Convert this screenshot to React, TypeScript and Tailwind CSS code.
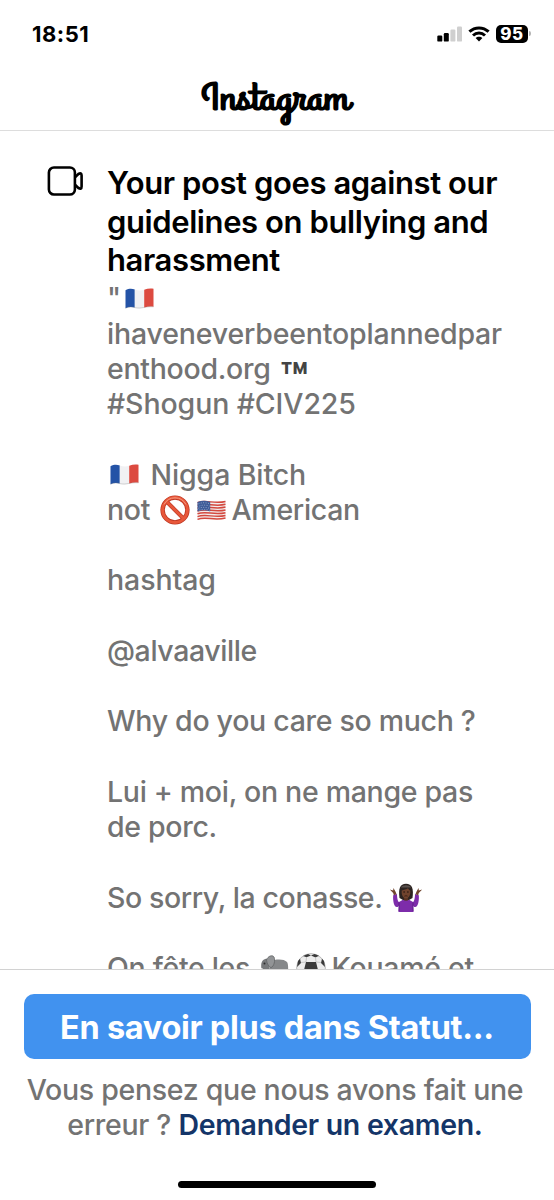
import type { ReactNode } from 'react'

function FlagFrance({ className }: { className?: string }) {
  return (
    <svg viewBox="0 0 29 21" className={`w-[29px] h-[21px] shrink-0 ${className}`}>
      <path d="M0.5 2.2C4 0.4 7 0.6 9.8 1.5V19.6C7 18.6 4 18.6 0.5 20.2Z" fill="#2453a6" />
      <path d="M9.8 1.5C13 2.6 16 2.8 19.2 1.8V19.6C16 20.5 13 20.6 9.8 19.6Z" fill="#f1f1f3" />
      <path d="M19.2 1.8C22.5 0.5 25.5 0.1 28.5 0.8V18.8C25.5 18.1 22.5 18.6 19.2 19.6Z" fill="#dc4a40" />
      <path d="M0.5 20.2C4 18.6 7 18.6 9.8 19.6C16 21.2 20 18.2 28.5 18.8" fill="none" stroke="#777" strokeOpacity="0.5" strokeWidth="0.6" />
    </svg>
  )
}

function FlagUsa({ className }: { className?: string }) {
  return (
    <svg viewBox="0 0 29 21" className={`w-[29px] h-[21px] shrink-0 ${className}`}>
      <path d="M0.5 2C9 -1.5 17 3.8 28.5 0.8V18.6C18 21.5 9 16.8 0.5 20Z" fill="#f2eded" />
      <g fill="none" stroke="#d4493f" strokeWidth="1.5">
        <path d="M0.5 2.6C9 -0.8 17 4.4 28.5 1.5" />
        <path d="M0.5 5.4C9 2 17 7.2 28.5 4.3" />
        <path d="M0.5 8.2C9 4.8 17 10 28.5 7.1" />
        <path d="M0.5 11C9 7.6 17 12.8 28.5 9.9" />
        <path d="M0.5 13.8C9 10.4 17 15.6 28.5 12.7" />
        <path d="M0.5 16.6C9 13.2 17 18.4 28.5 15.5" />
        <path d="M0.5 19.4C9 16 17 21.2 28.5 18" />
      </g>
      <path d="M0.5 2C5 0.2 9 0.6 13.2 1.8V11.4C9 10 5 10 0.5 11.4Z" fill="#3e5c98" />
      <g stroke="#a9bad8" strokeWidth="0.8" strokeDasharray="0.9 1.5" fill="none">
        <path d="M1.5 3.8C5 2.3 9 2.5 12.5 3.7" />
        <path d="M2.5 6C5 4.8 9 4.9 12.5 6" />
        <path d="M1.5 8.2C5 7 9 7.1 12.5 8.3" />
        <path d="M2.5 10C5 9.1 9 9.2 12.5 10.2" />
      </g>
    </svg>
  )
}

function Prohibited({ className }: { className?: string }) {
  return (
    <svg viewBox="0 0 30 30" className={`w-[30px] h-[30px] shrink-0 ${className}`}>
      <g fill="none">
        <circle cx="15" cy="15" r="12.4" stroke="#b93420" strokeWidth="4.4" />
        <path d="M6.5 6.5L23.5 23.5" stroke="#b93420" strokeWidth="4" />
        <circle cx="15" cy="15" r="12.4" stroke="#e8573a" strokeWidth="3" />
        <path d="M6.5 6.5L23.5 23.5" stroke="#e8573a" strokeWidth="2.8" />
        <path d="M4 9.5A12.4 12.4 0 0 1 26 9.5" stroke="#f59a80" strokeWidth="1" />
      </g>
    </svg>
  )
}

function Shrug({ className }: { className?: string }) {
  return (
    <svg viewBox="0 0 34 30" className={`w-[34px] h-[30px] shrink-0 ${className}`}>
      <path d="M10.5 15C9.2 5.5 11 0.8 17 0.8C23 0.8 24.8 5.5 23.5 15L20 17H14Z" fill="#2b2320" />
      <path d="M11.8 4.6C13.5 1.6 20.5 1.6 22.2 4.6Z" fill="#58504c" />
      <path d="M14.8 13H19.2V18H14.8Z" fill="#5a3322" />
      <path d="M12.7 7.5C15 7 17.5 6.2 19 5.2C19.6 6.4 20.5 7.2 21.3 7.5C21.7 12 19.7 15.4 17 15.4C14.3 15.4 12.3 12 12.7 7.5Z" fill="#70432d" />
      <path d="M14.3 9H16M18 9H19.7" stroke="#20130d" strokeWidth="1.1" />
      <path d="M15.4 13.2Q17 12.2 18.6 13.2" stroke="#341912" strokeWidth="0.8" fill="none" />
      <path d="M4.2 12.2L8 11C8 14 8.6 18.5 10 19L14 16.7Q17 18.6 20 16.7L24 19C25.4 18.5 26 14 26 11L29.8 12.2C30.3 17.5 29 24 26.2 24C24.8 24 24.3 23 24 22.4L24.6 29H9.4L10 22.4C9.7 23 9.2 24 7.8 24C5 24 3.7 17.5 4.2 12.2Z" fill="#7d2caa" />
      <path d="M10 19.5V28M24 19.5V28" stroke="#571880" strokeWidth="0.8" />
      <path d="M4.8 12.3L4.2 10L0.8 6.5L4.2 7.6L4.4 5L6.2 8L7.6 11.2ZM29.2 12.3L29.8 10L33.2 6.5L29.8 7.6L29.6 5L27.8 8L26.4 11.2Z" fill="#70432d" />
    </svg>
  )
}

function Elephant({ className }: { className?: string }) {
  return (
    <svg viewBox="0 0 30 26" className={`w-[30px] h-[26px] shrink-0 ${className}`}>
      <path d="M10 6C16 4 24 3.6 27 7C29 9.5 28 20 27 25H22V18H15V25H9V15Z" fill="#858789" />
      <path d="M9 4C4 3 1 6 1.2 11C1.3 16 0.5 19 2 22H5C4.4 18 6 16 9 15Z" fill="#77797b" />
      <path d="M6.5 5C8 0.8 12.5 -0.4 14 2C15.5 5.5 14 11.5 11 12.6C9 12 7 9 6.5 5Z" fill="#929496" stroke="#626466" strokeWidth="0.8" />
      <circle cx="4.5" cy="8.5" r="1" fill="#303030" />
      <path d="M2 13L0.8 17" stroke="#eee" strokeWidth="1.5" />
    </svg>
  )
}

function SoccerBall({ className }: { className?: string }) {
  return (
    <svg viewBox="0 0 30 30" className={`w-[30px] h-[30px] shrink-0 ${className}`}>
      <circle cx="15" cy="15" r="14.4" fill="#ececec" stroke="#aaa" strokeWidth="0.8" />
      <path d="M10 9H20L22 17L15 22L8 17ZM12 0.9L15 2.4L18.5 0.9L23 2.8L19.5 4.4L15 2.4L10.5 4.2L7 3ZM2 8L4 5.8L5 10L1 14ZM28 8L26 5.8L25 10L29 14Z" fill="#3a3a3a" />
      <path d="M10 9L5 9.5M20 9L25 9.5M10 9L10.5 4.2M20 9L19.5 4.4" stroke="#bbb" strokeWidth="0.8" />
    </svg>
  )
}

function StatusBar() {
  return (
    <div className="h-[67px] pl-8 pr-[23px] flex items-center justify-between">
      <div className="text-[22px] leading-6 font-bold tracking-[0.5px]">18:51</div>
      <div className="flex items-center">
        <svg viewBox="0 0 26 16" className="w-[26px] h-4 mr-[5px]">
          <rect x="0.3" y="9.6" width="5" height="6" rx="1.2" />
          <rect x="6.8" y="7" width="5" height="8.6" rx="1.2" />
          <rect x="13.4" y="3.6" width="5" height="12" rx="1.2" fill="#cfcfcf" />
          <rect x="20" y="0.4" width="5" height="15.2" rx="1.2" fill="#cfcfcf" />
        </svg>
        <svg viewBox="0 0 22 16" className="w-[22px] h-4 mr-1.5">
          <g fill="none" stroke="#000" strokeWidth="3">
            <path d="M1.4 5.7C6.8 0.6 15.2 0.6 20.6 5.7" />
            <path d="M5 9.5C8.4 6.3 13.6 6.3 17 9.5" />
          </g>
          <path d="M7.6 12.1C9.5 10.3 12.5 10.3 14.4 12.1L11 15.6Z" />
        </svg>
        <div className="w-8 h-[18px] rounded-[5px] bg-black text-white text-[17px] leading-[18px] font-extrabold text-center tracking-[0.5px]">
          95
        </div>
        <div className="w-0.5 h-[5px] ml-px rounded-r-full bg-[#b5b5b5]" />
      </div>
    </div>
  )
}

function Line({ children, className = '' }: { children?: ReactNode; className?: string }) {
  return <div className={`h-[35.25px] flex items-center whitespace-pre ${className}`}>{children}</div>
}

function App() {
  return (
    <div className="w-[554px] h-[1200px] flex flex-col overflow-hidden bg-white text-black font-['Inter','Liberation_Sans',sans-serif]">
      <StatusBar />

      <header className="h-16 shrink-0 border-b border-[#dddddd] flex justify-center items-center pr-1">
        <div className="scale-x-[1.23] font-['Grand_Hotel','Lato',cursive] text-[38px] leading-10 font-bold">Instagram</div>
      </header>

      <main className="h-[838px] shrink-0 overflow-hidden flex pl-[47px] pt-[33px]">
        <svg viewBox="0 0 37 30" fill="none" stroke="#000" strokeWidth="2.6" className="w-[37px] h-[30px] mt-0.5 mr-[23px] shrink-0">
          <rect x="1.9" y="1.5" width="26" height="27" rx="5" />
          <path d="M28 11.2L31.4 8Q34.6 6.2 34.6 9.6V20.4Q34.6 23.8 31.4 22L28 18.8" strokeLinejoin="round" />
        </svg>

        <div>
          <h1 className="text-[31px] leading-[38.7px] font-semibold whitespace-pre tracking-[-0.4px]">
            <span className="block">Your post goes against our</span>
            <span className="block">guidelines on bullying and</span>
            <span className="block">harassment</span>
          </h1>

          <div className="pt-px text-[28.5px] font-medium text-[#737373] tracking-[-0.3px]">
            <Line>
              "<FlagFrance className="ml-1" />
            </Line>
            <Line className="tracking-[-0.18px]">ihaveneverbeentoplannedpar</Line>
            <Line>
              enthood.org <span className="ml-0.5 translate-y-[9px] text-[45px] leading-none font-bold text-[#444444]">™</span>
            </Line>
            <Line className="tracking-[-0.1px]">#Shogun #CIV225</Line>
            <Line />
            <Line className="tracking-[-0.1px]">
              <FlagFrance className="ml-[3px] mr-1" /> Nigga Bitch
            </Line>
            <Line>
              not <Prohibited className="ml-[3px]" />
              <FlagUsa className="ml-[7px] mr-[5px]" />
              American
            </Line>
            <Line />
            <Line className="tracking-[-0.1px]">hashtag</Line>
            <Line />
            <Line className="tracking-[-0.4px]">@alvaaville</Line>
            <Line />
            <Line>Why do you care so much ?</Line>
            <Line />
            <Line>Lui + moi, on ne mange pas</Line>
            <Line>de porc.</Line>
            <Line />
            <Line className="tracking-[-0.4px]">
              So sorry, la conasse. <Shrug />
            </Line>
            <Line />
            <Line>
              On fête les <Elephant className="ml-[3px]" />
              <SoccerBall className="ml-1.5 mr-[5px]" />
              Kouamé et
            </Line>
          </div>
        </div>
      </main>

      <footer className="grow border-t border-[#d2d2d2] pt-6 flex flex-col items-center">
        <button className="w-[507px] h-[65px] pt-1 shrink-0 rounded-[10px] bg-[#4192ef] text-white text-[32.5px] leading-none font-bold tracking-[-0.3px] whitespace-nowrap">
          En savoir plus dans Statut...
        </button>
        <div className="mt-[13px] pr-1 text-[28.5px] leading-[35px] font-medium text-[#737373] text-center whitespace-nowrap tracking-[-0.3px]">
          <div>Vous pensez que nous avons fait une</div>
          <div>
            erreur ? <span className="text-[#143568] font-semibold">Demander un examen.</span>
          </div>
        </div>
        <div className="mt-auto mb-3 w-[198px] h-[7px] rounded-full bg-black" />
      </footer>
    </div>
  )
}

export default App
